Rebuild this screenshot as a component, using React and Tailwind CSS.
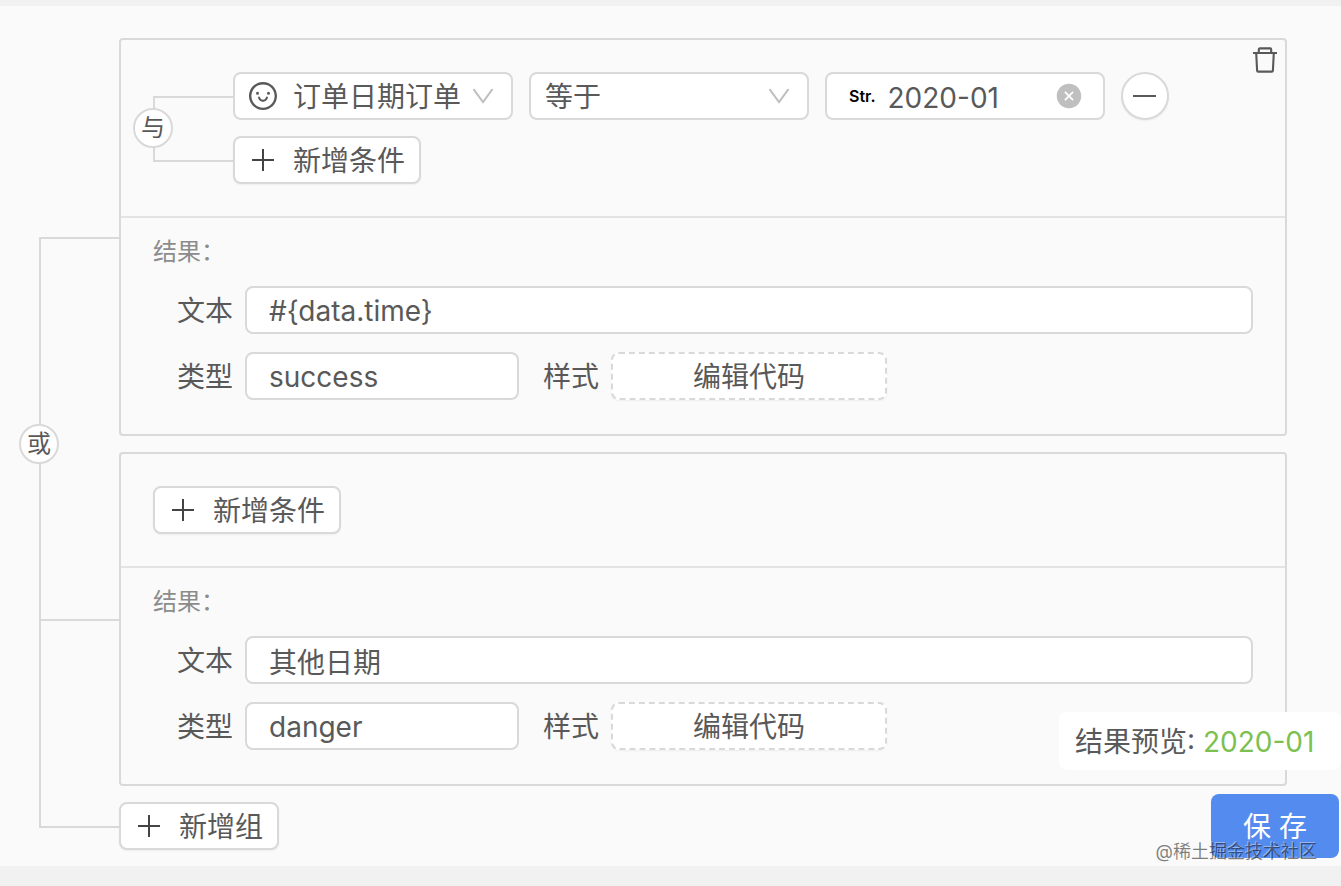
import React, { useState } from "react";
import { AiFillCloseCircle, AiOutlineSmile } from "react-icons/ai";

const initialGroups = [
  {
    id: "g1",
    conditions: [{ id: "c1", field: "订单日期订单", operator: "等于", value: "2020-01" }],
    text: "#{data.time}",
    type: "success",
  },
  { id: "g2", conditions: [], text: "其他日期", type: "danger" },
];

function ChevronIcon() {
  return (
    <svg viewBox="0 0 22 16" className="pointer-events-none h-4 w-[22px] shrink-0" fill="none" stroke="#bfbfbf" strokeWidth="2">
      <path d="M1.5 1.2 11 14 20.5 1.2" />
    </svg>
  );
}

function PlusIcon() {
  return (
    <svg viewBox="0 0 32 32" className="mr-[14px] h-8 w-8 shrink-0" fill="none" stroke="#444" strokeWidth="2">
      <path d="M5 16h22M16 5v22" />
    </svg>
  );
}

function MinusIcon() {
  return (
    <svg viewBox="0 0 32 32" className="h-8 w-8" fill="none" stroke="#595959" strokeWidth="2">
      <path d="M4 16h23" />
    </svg>
  );
}

function TrashIcon() {
  return (
    <svg viewBox="0 0 24 28" className="h-7 w-6" fill="none" stroke="#595959" strokeWidth="2.1" strokeLinejoin="round">
      <path d="M0 7h24M5.8 7V3.4q0-1 1-1h10.4q1 0 1 1V7M3.2 7l.9 17.6q.1 1 1 1h13.8q.9 0 1-1L20.8 7" />
    </svg>
  );
}

// Rows joined on the left by a bracket line, with the logic word on top of it
function LogicTree({ label, children }) {
  const rows = React.Children.toArray(children);
  return (
    <div className="relative">
      {rows.map((row, index) => {
        const first = index === 0;
        const last = index === rows.length - 1;
        return (
          <React.Fragment key={row.key}>
            {!first && <div className="h-4 border-l-2 border-[#d9d9d9]" />}
            <div className="flex">
              <div className="flex w-20 shrink-0 flex-col">
                <div className={`flex-1 border-[#d9d9d9] pt-0.5 ${first ? "" : "border-l-2"}`} />
                <div className={`flex-1 border-t-2 border-[#d9d9d9] ${last ? "" : "border-l-2"}`} />
              </div>
              <div className="min-w-0 flex-1">{row}</div>
            </div>
          </React.Fragment>
        );
      })}
      <button className="absolute top-1/2 -left-5 grid h-10 w-10 -translate-y-1/2 place-items-center rounded-full border-2 border-[#d9d9d9] bg-white text-2xl leading-none">
        {label}
      </button>
    </div>
  );
}

function AddButton({ children, onClick }) {
  return (
    <button onClick={onClick} className="flex h-12 items-center rounded-lg border-2 border-[#d9d9d9] bg-white pr-[14px] pl-3 shadow-xs">
      <PlusIcon />
      <span className="pt-0.5">{children}</span>
    </button>
  );
}

function ConditionRow({ condition, onChange, onRemove }) {
  return (
    <div className="flex gap-4">
      <label className="flex h-12 w-[280px] items-center rounded-lg border-2 border-[#d9d9d9] bg-white pr-[17px] pl-3">
        <AiOutlineSmile size={32} className="mr-[14px] shrink-0" />
        <select aria-label="字段" value={condition.field} onChange={(event) => onChange({ field: event.target.value })} className="min-w-0 flex-1 appearance-none pt-0.5 outline-none">
          <option>订单日期订单</option>
        </select>
        <ChevronIcon />
      </label>
      <label className="flex h-12 w-[280px] items-center rounded-lg border-2 border-[#d9d9d9] bg-white pr-[17px] pl-[14px]">
        <select aria-label="运算符" value={condition.operator} onChange={(event) => onChange({ operator: event.target.value })} className="min-w-0 flex-1 appearance-none pt-0.5 outline-none">
          <option>等于</option>
          <option>不等于</option>
        </select>
        <ChevronIcon />
      </label>
      <div className="flex h-12 w-[280px] items-center rounded-lg border-2 border-[#d9d9d9] bg-white pr-5 pl-[22px]">
        <span className="mr-3 text-base font-semibold text-black">Str.</span>
        <input aria-label="值" value={condition.value} onChange={(event) => onChange({ value: event.target.value })} className="min-w-0 flex-1 pt-1 outline-none" />
        <button aria-label="清空" onClick={() => onChange({ value: "" })} className="text-[#bfbfbf]">
          <AiFillCloseCircle size={28} />
        </button>
      </div>
      <button aria-label="删除条件" onClick={onRemove} className="grid h-12 w-12 place-items-center rounded-full border-2 border-[#d9d9d9] bg-white shadow-xs">
        <MinusIcon />
      </button>
    </div>
  );
}

function ResultForm({ group, onChange }) {
  const inputClass = "h-12 rounded-lg border-2 border-[#d9d9d9] bg-white px-[22px] pt-0.5 outline-none focus:border-[#548bee]";
  return (
    <div className="px-8 pt-4 pb-[34px]">
      <p className="text-2xl leading-9 text-[#8c8c8c]">结果：</p>
      <div className="mt-4 flex flex-col gap-[18px] pl-6">
        <div className="flex items-center gap-3">
          <label htmlFor={`${group.id}-text`} className="pt-0.5">文本</label>
          <input id={`${group.id}-text`} value={group.text} onChange={(event) => onChange({ text: event.target.value })} className={`min-w-0 flex-1 ${inputClass}`} />
        </div>
        <div className="flex items-center gap-3">
          <label htmlFor={`${group.id}-type`} className="pt-0.5">类型</label>
          <input id={`${group.id}-type`} value={group.type} onChange={(event) => onChange({ type: event.target.value })} className={`w-[274px] ${inputClass}`} />
          <label htmlFor={`${group.id}-style`} className="ml-3 pt-0.5">样式</label>
          <button id={`${group.id}-style`} className="h-12 w-[276px] rounded-lg border-2 border-dashed border-[#d9d9d9] bg-white pt-0.5 shadow-xs">
            编辑代码
          </button>
        </div>
      </div>
    </div>
  );
}

export default function App() {
  const [groups, setGroups] = useState(initialGroups);

  function updateGroup(id, patch) {
    setGroups((current) => current.map((group) => (group.id === id ? { ...group, ...patch } : group)));
  }

  function addCondition(group) {
    const condition = { id: `c${Date.now()}`, field: "订单日期订单", operator: "等于", value: "" };
    updateGroup(group.id, { conditions: [...group.conditions, condition] });
  }

  function addGroup() {
    setGroups((current) => [...current, { id: `g${Date.now()}`, conditions: [], text: "", type: "" }]);
  }

  return (
    <div className="min-h-screen bg-[#f1f1f1] pt-1.5 pb-5 font-[Inter,'Noto_Sans_CJK_SC',sans-serif] text-[28px] leading-10 text-[#595959]">
      <main className="relative bg-[#fafafa] pt-8 pr-[54px] pb-4 pl-[39px]">
        <LogicTree label="或">
          {groups.map((group) => (
            <section key={group.id} className="relative rounded-sm border-2 border-[#d9d9d9]">
              <div className="border-b-2 border-[#e3e3e3] p-8">
                {group.conditions.length > 0 ? (
                  <LogicTree label="与">
                    {group.conditions.map((condition) => (
                      <ConditionRow
                        key={condition.id}
                        condition={condition}
                        onChange={(patch) => updateGroup(group.id, { conditions: group.conditions.map((item) => (item.id === condition.id ? { ...item, ...patch } : item)) })}
                        onRemove={() => updateGroup(group.id, { conditions: group.conditions.filter((item) => item.id !== condition.id) })}
                      />
                    ))}
                    <AddButton key="add" onClick={() => addCondition(group)}>新增条件</AddButton>
                  </LogicTree>
                ) : (
                  <AddButton onClick={() => addCondition(group)}>新增条件</AddButton>
                )}
              </div>
              <ResultForm group={group} onChange={(patch) => updateGroup(group.id, patch)} />
              {group.conditions.length > 0 && (
                <button aria-label="删除组" onClick={() => setGroups(groups.filter((item) => item.id !== group.id))} className="absolute top-1.5 right-2">
                  <TrashIcon />
                </button>
              )}
            </section>
          ))}
          <AddButton key="add-group" onClick={addGroup}>新增组</AddButton>
        </LogicTree>

        <div className="absolute right-0.5 bottom-2 flex flex-col items-end gap-6">
          <p className="-mr-0.5 min-w-[282px] rounded-lg bg-white pt-2.5 pr-4 pb-2 pl-4 leading-10">
            结果预览: <span className="text-[#7cc050]">2020-01</span>
          </p>
          <button className="h-16 w-32 rounded-lg bg-[#548bee] pt-0.5 text-white">保 存</button>
        </div>
        <span className="pointer-events-none absolute right-6 bottom-0.5 text-lg leading-6 text-black/50 [text-shadow:-1px_-1px_0_rgba(255,255,255,0.4)]">@稀土掘金技术社区</span>
      </main>
    </div>
  );
}
